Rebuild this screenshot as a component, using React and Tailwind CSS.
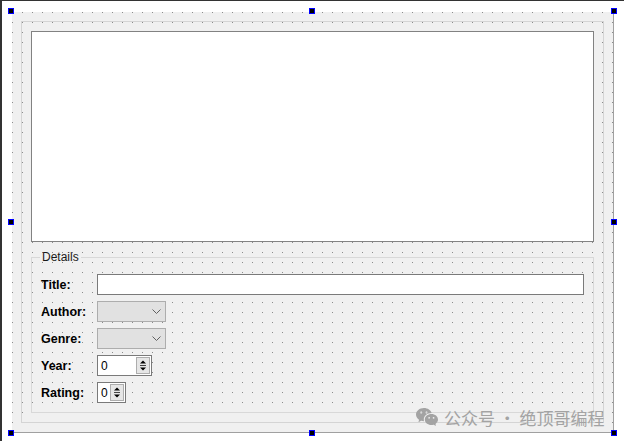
import { RiWechatFill } from "react-icons/ri";

const labelCls = "text-[12.5px] font-bold text-black leading-none pt-[1px]";

// Qt Designer style selection handle
const Handle = ({ className }) => (
  <div className={`absolute w-[6px] h-[6px] border border-[#0000ff] bg-black ${className}`} />
);

const Chevron = () => (
  <svg width="9" height="5" viewBox="0 0 9 5">
    <polyline points="0.5,0.5 4.5,4.5 8.5,0.5" fill="none" stroke="#606060" strokeWidth="1" />
  </svg>
);

const SpinButtons = () => (
  <svg width="14" height="17" viewBox="0 0 14 17" className="shrink-0">
    <rect x="0.5" y="0.5" width="13" height="16" fill="#e6e6e6" stroke="#adadad" />
    <path d="M4 6.5 L7 3.5 L10 6.5Z" fill="#000" />
    <line x1="4" y1="8.5" x2="10" y2="8.5" stroke="#444" />
    <path d="M4 10.5 L10 10.5 L7 13.5Z" fill="#000" />
  </svg>
);

const Combo = () => (
  <div className="w-[69px] h-[21px] bg-[#e1e1e1] border border-[#adadad] flex items-center justify-end pr-[4px]">
    <Chevron />
  </div>
);

const Spin = ({ width }) => (
  <div className={`${width} h-[21px] bg-white border border-[#7a7a7a] flex items-center pl-[3px] pr-[1px]`}>
    <span className="flex-1 text-[12px] leading-none text-black">0</span>
    <SpinButtons />
  </div>
);

export default function App() {
  const rows = [
    { label: "Title:", field: <div className="w-full h-[21px] bg-white border border-[#7a7a7a]" /> },
    { label: "Author:", field: <Combo /> },
    { label: "Genre:", field: <Combo /> },
    { label: "Year:", field: <Spin width="w-[55px]" /> },
    { label: "Rating:", field: <Spin width="w-[29px]" /> },
  ];

  return (
    <div
      className="relative w-[624px] h-[441px] bg-white border-t border-l-2 border-[#333333] pl-[10px] pt-[11px]"
      style={{ fontFamily: '"Liberation Sans", Arial, sans-serif' }}
    >
      {/* form */}
      <div className="w-[602px] h-[421px] bg-[#f0f0f0] border-r border-b border-[#a0a0a0] p-[9px] [background-image:conic-gradient(at_1px_1px,transparent_75%,#8c8c8c_0)] [background-size:10px_10px]">
        {/* vertical layout frame */}
        <div className="h-full border border-[#d4d4d4] p-[9px] flex flex-col gap-[8px]">
          <div className="h-[211px] shrink-0 bg-white border border-[#828282]" />

          <fieldset className="flex-1 border border-[#d8d8d8] pl-[8px] pr-[9px] pb-[8px]">
            <legend className="px-[2px] text-[12px] leading-[14px] text-[#1a1a1a]">Details</legend>
            <div className="mt-[10px] grid grid-cols-[56px_1fr] gap-y-[6px] pl-[1px] items-center">
              {rows.map((r) => (
                <div key={r.label} className="contents">
                  <span className={labelCls}>{r.label}</span>
                  <div className="flex">{r.field}</div>
                </div>
              ))}
            </div>
          </fieldset>
        </div>
      </div>

      {/* selection handles */}
      <Handle className="left-[6px] top-[7px]" />
      <Handle className="left-[307px] top-[7px]" />
      <Handle className="left-[609px] top-[7px]" />
      <Handle className="left-[6px] top-[218px]" />
      <Handle className="left-[609px] top-[218px]" />
      <Handle className="left-[6px] top-[429px]" />
      <Handle className="left-[307px] top-[429px]" />
      <Handle className="left-[609px] top-[429px]" />

      {/* watermark */}
      <div
        className="absolute left-[413px] top-[405px] h-[22px] flex items-center gap-[5px] text-[#a3a3a3]"
        style={{ fontFamily: '"Noto Sans CJK SC", sans-serif' }}
      >
        <RiWechatFill className="w-[24px] h-[24px]" />
        <span className="text-[17px] leading-none">公众号 · 绝顶哥编程</span>
      </div>
    </div>
  );
}
